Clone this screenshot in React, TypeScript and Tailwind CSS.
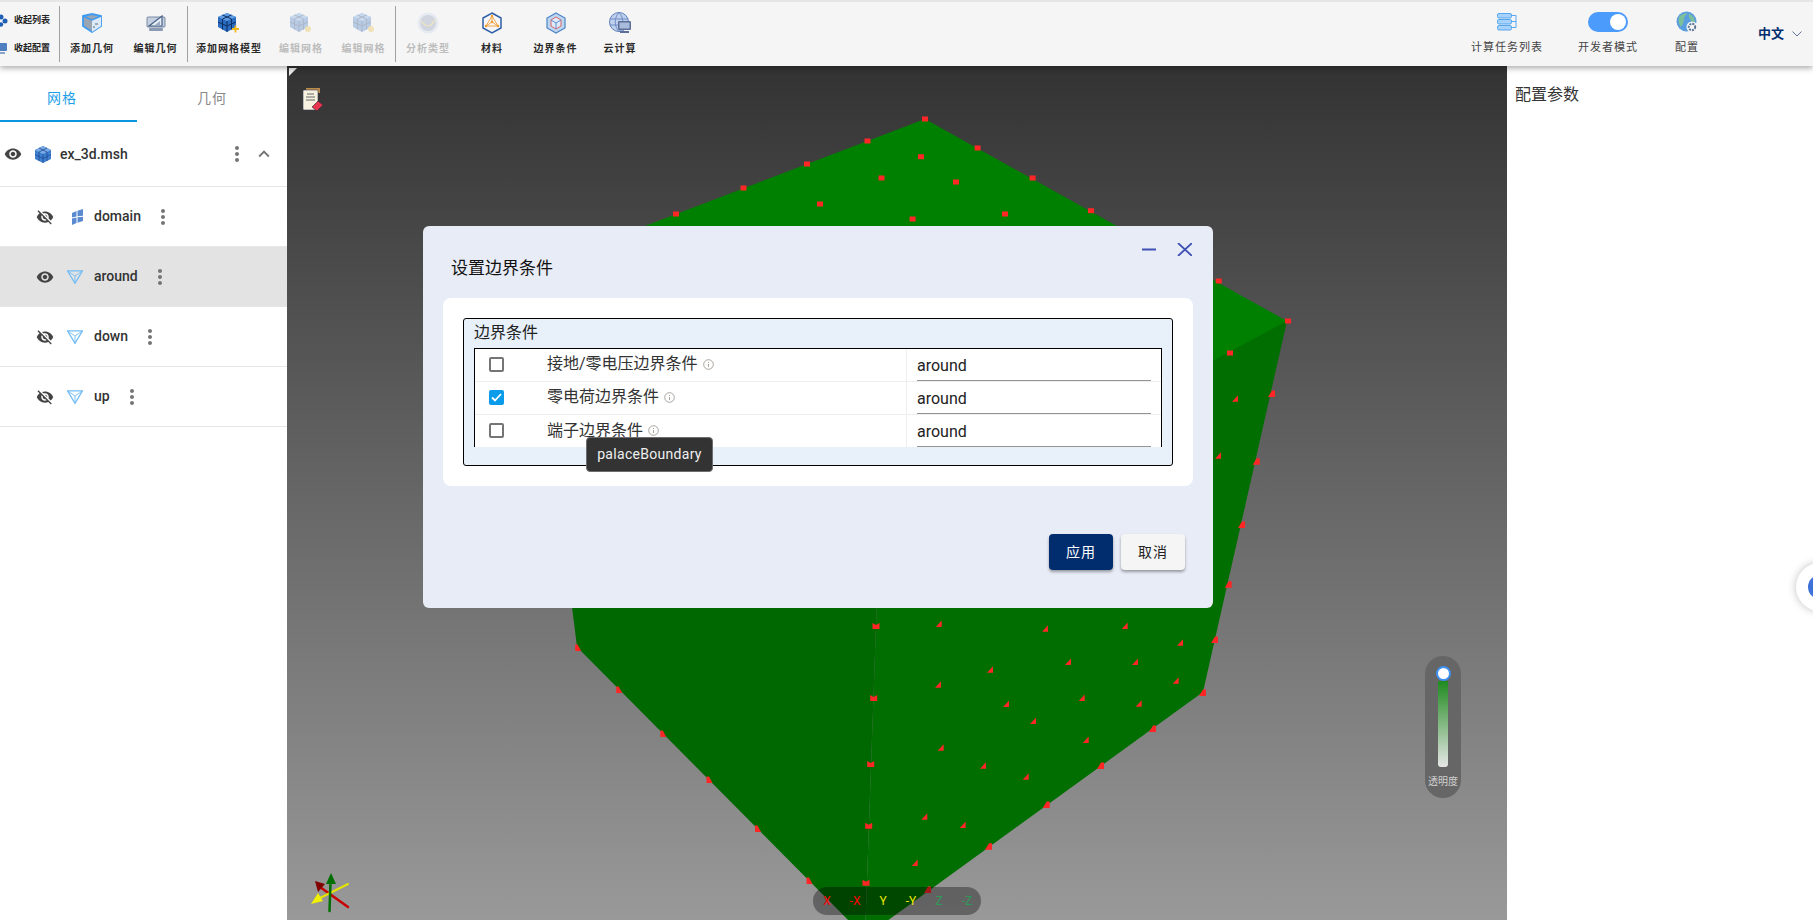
/**
 * Mesh / boundary condition editor page with the "设置边界条件" dialog open.
 */
import type { ReactNode } from 'react';
import { MdExpandLess, MdMoreVert, MdVisibility, MdVisibilityOff } from 'react-icons/md';

type Marker = [number, number];

const SQUARES: Marker[] = [
  [925, 119], [867.5, 141], [977.6, 148], [807, 164], [921, 156.7], [743.5, 188], [881.5, 178], [956, 182],
  [1032.6, 178], [676, 214], [820, 204], [1005, 214], [912.6, 219], [1091, 210.7], [1218.7, 281], [1288, 321],
  [1230, 353],
];
const TRIANGLES: Marker[] = [
  [938.7, 624], [1045, 628.7], [1124.7, 626], [1180, 642.7], [990, 669.7], [1068, 662], [1135, 662], [1175.7, 680.7],
  [938, 684.7], [1006, 704], [1081.7, 698], [1138.7, 703.7], [1033, 721], [1085.7, 740], [940.7, 747.7], [983, 765.7],
  [1025.7, 776.7], [924.3, 816.7], [962.7, 825], [914.7, 863], [1235, 398.7], [1218, 455.7],
];
const RIGHT_EDGE: Marker[] = [
  [1203, 693], [1153, 729], [1101, 766], [1046.7, 805], [989, 846.7], [928, 890], [1272, 394], [1256.7, 461.7],
  [1242, 525], [1228.7, 584.7], [1215, 640],
];
const NOTCHED: Marker[] = [[876, 626], [873.7, 698], [870.7, 764], [868.7, 825.7], [866, 882.7]];
const LEFT_EDGE: Marker[] = [[577.6, 648], [618.7, 690], [662.8, 734], [709, 780], [757.5, 829], [809, 881]];

function ModelView() {
  return (
    <svg className="absolute inset-0 h-full w-full" viewBox="287 66 1220 854">
      <polygon points="925,119 1287,321 1213,363 879,540 530,270" fill="#008000" />
      <polygon points="1287,321 1203,692 865,937 879,540" fill="#006e00" />
      <polygon points="530,270 879,540 865,937 577,647" fill="#006800" />
      {SQUARES.map(([x, y]) => (
        <rect key={`s${x}`} x={x - 3} y={y - 2.5} width="6" height="5" fill="#ff2626" />
      ))}
      {TRIANGLES.map(([x, y]) => (
        <polygon key={`t${x}`} points={`${x + 3},${y - 3.5} ${x + 3},${y + 3} ${x - 3},${y + 3}`} fill="#ff2626" />
      ))}
      {RIGHT_EDGE.map(([x, y]) => (
        <polygon
          key={`r${x}`}
          points={`${x},${y - 3.5} ${x + 3},${y - 3.5} ${x + 3},${y + 3} ${x - 4},${y + 3}`}
          fill="#ff2626"
        />
      ))}
      {NOTCHED.map(([x, y]) => (
        <polygon
          key={`n${x}`}
          points={`${x - 3.5},${y - 3} ${x},${y - 1} ${x + 3.5},${y - 3} ${x + 3.5},${y + 3} ${x - 3.5},${y + 3}`}
          fill="#ff2626"
        />
      ))}
      {LEFT_EDGE.map(([x, y]) => (
        <polygon
          key={`l${x}`}
          points={`${x - 2.5},${y - 3.5} ${x},${y - 3.5} ${x + 3.5},${y + 3} ${x - 2.5},${y + 3}`}
          fill="#ff2626"
        />
      ))}

      {/* corner marker */}
      <polygon points="289,68 297,68 289,76" fill="#eeeeee" />

      {/* notes icon */}
      <g transform="translate(303 88)">
        <rect x="3" y="0" width="14" height="5" fill="#b98a4a" />
        <rect x="0" y="2" width="15" height="20" rx="1" fill="#f7f1df" stroke="#3a3a55" strokeWidth="0.600" />
        <path d="M4 6h7M3 9h9M3 12h9" stroke="#666" strokeWidth="1" />
        <polygon points="9,19 15,13 20,17 14,23" fill="#e8344c" stroke="#2a2a3a" strokeWidth="0.600" />
      </g>

      {/* axis gizmo */}
      <g strokeLinecap="round">
        <line x1="348" y1="907" x2="320" y2="887" stroke="#c80000" strokeWidth="2.5" />
        <polygon points="315,881 325,884 318,892" fill="#800000" />
        <line x1="348" y1="884" x2="320" y2="898" stroke="#e4e400" strokeWidth="2" />
        <polygon points="311,904 318,893 323,901" fill="#f0f000" />
        <line x1="329.5" y1="911" x2="330.5" y2="882" stroke="#006e00" strokeWidth="2.5" />
        <polygon points="331,873 326,884 336,884" fill="#006e00" />
      </g>
    </svg>
  );
}

function MeshCube({ plus, dim }: { plus?: boolean; dim?: boolean }) {
  return (
    <svg width="22" height="21" viewBox="0 0 22 21" className={dim ? 'opacity-30' : ''}>
      <polygon points="9,0 18,4 18,14 9,19 0,14 0,4" fill="#2a6cc0" />
      <polygon points="9,0 18,4 9,8 0,4" fill="#5f9ce4" />
      <path d="M4.5 2 13.5 6M13.5 2 4.5 6M9 8v11M4.5 6v10.500M13.500 6v10.500M0 9l9 4 9-4" stroke="#0e2f63" strokeWidth="1" fill="none" />
      {plus ? (
        <path d="M14 16h7M17.500 12.500v7" stroke="#f2b91f" strokeWidth="1.800" />
      ) : (
        <circle cx="18" cy="16" r="3" fill="#e8b52a" />
      )}
    </svg>
  );
}

const TOOLBAR_ICONS: Record<string, ReactNode> = {
  addGeo: (
    <svg width="20" height="20" viewBox="0 0 20 20">
      <polygon points="1,3 10,1 19,3 19,13 10,19 1,13" fill="#9aa5b4" stroke="#3f9bf0" strokeWidth="1.800" />
      <polygon points="10,7 19,3 19,13 10,19" fill="#dce9f7" />
      <path d="M1 3 10 7 19 3" stroke="#3f9bf0" strokeWidth="1.500" fill="none" />
      <path d="M13 11h3M11 14h2" stroke="#5a6a80" strokeWidth="1" />
    </svg>
  ),
  editGeo: (
    <svg width="20" height="18" viewBox="0 0 20 18">
      <rect x="1" y="3" width="18" height="10" rx="1" fill="#c4cfdf" stroke="#7a8aa5" />
      <polygon points="3,12 16,2 16,12" fill="#e8eef6" stroke="#4a6288" strokeWidth="1.200" />
      <polygon points="9,11 14,7 14,11" fill="#9aaac2" />
      <rect x="3" y="14" width="14" height="3" rx="1" fill="#8b9bb5" />
    </svg>
  ),
  analysis: (
    <svg width="22" height="22" viewBox="0 0 22 22" className="opacity-30">
      <circle cx="11" cy="11" r="10.500" fill="#c5d4ea" />
      <circle cx="11" cy="11" r="8" fill="#7d8fae" />
      <path d="M3 9c3 0 3 5 8 5s5-6 8-6" stroke="#e8c04a" strokeWidth="1.200" fill="none" />
    </svg>
  ),
  material: (
    <svg width="20" height="22" viewBox="0 0 20 22">
      <polygon points="10,1 19,6 19,16 10,21 1,16 1,6" fill="none" stroke="#2e5fa8" strokeWidth="1.500" />
      <path d="M10 4 16 14H4Z M10 4V10M4 14l6-4 6 4" fill="none" stroke="#f0a040" strokeWidth="0.900" />
      <circle cx="10" cy="4" r="1.200" fill="#ef9a2e" />
      <circle cx="4" cy="14" r="1.200" fill="#ef9a2e" />
      <circle cx="16" cy="14" r="1.200" fill="#ef9a2e" />
      <circle cx="10" cy="10" r="1.200" fill="#ef9a2e" />
    </svg>
  ),
  boundary: (
    <svg width="20" height="22" viewBox="0 0 20 22">
      <polygon points="10,1 19,6 19,16 10,21 1,16 1,6" fill="#bcd6f2" stroke="#4f83c4" strokeWidth="1.200" />
      <polygon points="10,5 15,8 15,14 10,17 5,14 5,8" fill="#dfeaf8" stroke="#e05a5a" strokeWidth="0.900" />
      <path d="M5 8l5 3 5-3M10 11v6" stroke="#4f83c4" strokeWidth="0.900" fill="none" />
    </svg>
  ),
  cloud: (
    <svg width="22" height="22" viewBox="0 0 22 22">
      <circle cx="10" cy="10" r="9.500" fill="#bfd0ee" stroke="#5d7fb8" />
      <path d="M10 .500c-5 5-5 14 0 19M10 .500c5 5 5 14 0 19M1 7h18M1 13h18" stroke="#5d7fb8" fill="none" strokeWidth="0.800" />
      <rect x="9" y="9" width="13" height="9" rx="1" fill="#5d6f96" />
      <rect x="10.500" y="10.500" width="10" height="6" fill="#a9bbdc" />
      <rect x="11" y="19" width="9" height="2" fill="#5d6f96" />
    </svg>
  ),
  tasks: (
    <svg width="20" height="18" viewBox="0 0 20 18" fill="#a6d2fb" stroke="#4aa0ee" strokeWidth="0.900">
      <rect x="0.500" y="0.500" width="14" height="4.500" rx="1.500" />
      <rect x="0.500" y="6.500" width="14" height="4.500" rx="1.500" />
      <rect x="0.500" y="12.500" width="14" height="4.500" rx="1.500" />
      <path d="M14.500 2.500H19V14.500H14.500M14.500 8.500H19" fill="none" />
    </svg>
  ),
  config: (
    <svg width="22" height="22" viewBox="0 0 22 22">
      <circle cx="10.500" cy="10.500" r="10" fill="#5b9ee0" />
      <path d="M3 6c3-3 6-4 8-4-1 3-3 3-3 6s-2 6-3 8c-2-2-3-6-2-10ZM13 3c3 1 6 4 6 8-3 0-4-1-5-3s-2-3-1-5Z" fill="#7cc09a" />
      <circle cx="16" cy="16" r="5.500" fill="#f5f5f5" />
      <circle cx="16" cy="16" r="3.200" fill="none" stroke="#5c7596" strokeWidth="2" strokeDasharray="2 1" />
    </svg>
  ),
};

function ToolItem({ label, width, icon, disabled }: { label: string; width: string; icon: ReactNode; disabled?: boolean }) {
  return (
    <div className={`flex h-full shrink-0 flex-col items-center pt-[10px] ${width}`}>
      <div className="flex h-[22px] items-center justify-center">{icon}</div>
      <div className={`mt-[8px] text-[10px] leading-[14px] font-bold tracking-[1px] whitespace-nowrap ${disabled ? 'text-[#bdbdbd]' : 'text-[#2a2a2a]'}`}>
        {label}
      </div>
    </div>
  );
}

function RightTool({ label, width, icon }: { label: string; width: string; icon: ReactNode }) {
  return (
    <div className={`flex h-full shrink-0 flex-col items-center pt-[9px] ${width}`}>
      <div className="flex h-[22px] items-center justify-center">{icon}</div>
      <div className="mt-[8px] text-[11px] leading-[14px] tracking-[1px] text-[#444444] whitespace-nowrap">{label}</div>
    </div>
  );
}

function Divider() {
  return <div className="h-[56px] w-px shrink-0 bg-[#a0a0a0]" />;
}

function Toolbar() {
  return (
    <header className="relative z-10 flex h-[66px] shrink-0 items-center border-t-2 border-[#e6e6e6] bg-[#f5f5f5] shadow-[0_2px_6px_rgba(0,0,0,0.35)]">
      <div className="flex h-full w-[59px] shrink-0 flex-col gap-[13px] overflow-hidden pt-[11px] text-[9px] leading-[15px] font-bold text-[#222222]">
        <div className="flex items-center gap-[6px] pl-0">
          <svg width="8" height="13" viewBox="0 0 8 13" fill="#1f5fb4">
            <circle cx="1" cy="3" r="2.500" />
            <circle cx="5" cy="7" r="2.500" />
            <circle cx="1" cy="10.500" r="2.200" />
          </svg>
          <span>收起列表</span>
        </div>
        <div className="flex items-center gap-[6px]">
          <svg width="8" height="13" viewBox="0 0 8 13" fill="#4f7fc0">
            <rect x="-5" y="1" width="12" height="8" rx="1" />
            <rect x="-2" y="10" width="7" height="2" fill="#8aa4c8" />
          </svg>
          <span>收起配置</span>
        </div>
      </div>
      <Divider />
      <ToolItem label="添加几何" width="w-[64px]" icon={TOOLBAR_ICONS.addGeo} />
      <ToolItem label="编辑几何" width="w-[63px]" icon={TOOLBAR_ICONS.editGeo} />
      <Divider />
      <ToolItem label="添加网格模型" width="w-[82px]" icon={<MeshCube plus />} />
      <ToolItem label="编辑网格" width="w-[62px]" icon={<MeshCube dim />} disabled />
      <ToolItem label="编辑网格" width="w-[63px]" icon={<MeshCube dim />} disabled />
      <Divider />
      <ToolItem label="分析类型" width="w-[64px]" icon={TOOLBAR_ICONS.analysis} disabled />
      <ToolItem label="材料" width="w-[64px]" icon={TOOLBAR_ICONS.material} />
      <ToolItem label="边界条件" width="w-[63px]" icon={TOOLBAR_ICONS.boundary} />
      <ToolItem label="云计算" width="w-[66px]" icon={TOOLBAR_ICONS.cloud} />

      <div className="ml-auto flex h-full items-start">
        <RightTool label="计算任务列表" width="w-[88px]" icon={TOOLBAR_ICONS.tasks} />
        <RightTool
          label="开发者模式"
          width="w-[72px] ml-[21px]"
          icon={
            <div className="flex h-[20px] w-[40px] items-center justify-end rounded-full bg-[#4a9bfb] pr-[2px]">
              <div className="size-[16px] rounded-full bg-white" />
            </div>
          }
        />
        <RightTool label="配置" width="w-[40px] ml-[23px]" icon={TOOLBAR_ICONS.config} />
        <div className="ml-[51px] flex items-center pt-[24px] pr-[11px]">
          <span className="text-[13px] leading-[16px] font-bold text-[#012d6f]">中文</span>
          <svg className="ml-[8px]" width="10" height="6" viewBox="0 0 10 6" fill="none" stroke="#5d7596">
            <path d="M.5.5 5 5 9.500.5" />
          </svg>
        </div>
      </div>
    </header>
  );
}

function Triangle() {
  return (
    <svg width="16" height="14" viewBox="0 0 16 14" fill="none" stroke="#74bdf5" strokeWidth="1">
      <polygon points="0.500,0.800 15.500,0.800 8,13.300" strokeWidth="1.300" />
      <path d="M.5.800 8 6l7.500-5.200M8 6v7.300" strokeWidth="0.900" />
    </svg>
  );
}

function MeshRow({ name, visible, active, icon }: { name: string; visible?: boolean; active?: boolean; icon: ReactNode }) {
  const Eye = visible ? MdVisibility : MdVisibilityOff;
  return (
    <div className={`flex h-[60px] items-center border-b border-[#e6e6e6] pl-[36px] ${active ? 'bg-[#e3e3e3]' : ''}`}>
      <Eye size={18} className="text-[#444444]" />
      <div className="ml-[13px] flex w-[16px] justify-center">{icon}</div>
      <span className="mb-[1px] ml-[11px] text-[14px] leading-[20px] font-medium text-[#333333]">{name}</span>
      <MdMoreVert size={24} className="ml-[10px] text-[#757575]" />
    </div>
  );
}

function Sidebar() {
  return (
    <aside className="w-[287px] shrink-0 bg-white">
      <div className="flex h-[56px] text-[14px] tracking-[1px]">
        <div className="flex w-[137px] items-center justify-center border-b-2 border-[#0a96e0] pt-[11px] pr-[13px] text-[#1ea0e8]">网格</div>
        <div className="flex flex-1 items-center justify-center pt-[9px] text-[#888888]">几何</div>
      </div>
      <div className="flex h-[65px] items-center border-b border-[#e6e6e6] pl-[4px]">
        <MdVisibility size={18} className="text-[#444444]" />
        <svg className="ml-[13px]" width="16" height="17" viewBox="0 0 16 17">
          <polygon points="8,0 16,4 16,13 8,17 0,13 0,4" fill="#3f7fd0" />
          <polygon points="8,0 16,4 8,8 0,4" fill="#7aaae6" />
          <path d="M4 2l8 4M12 2 4 6M8 8v9M4 6v9M12 6v9M0 8.500l8 4 8-4" stroke="#1e4d94" strokeWidth="0.800" fill="none" />
        </svg>
        <span className="ml-[9px] text-[14px] leading-[20px] font-medium text-[#333333]">ex_3d.msh</span>
        <MdMoreVert size={24} className="ml-[97px] text-[#757575]" />
        <MdExpandLess size={22} className="ml-[4px] text-[#757575]" />
      </div>
      <MeshRow
        name="domain"
        icon={
          <svg className="ml-[4px] shrink-0" width="12" height="16" viewBox="0 0 12 16" fill="#5b8ad0">
            <polygon points="1,4 5.500,2 5.500,7.500 1,8.500" />
            <polygon points="6.500,1.800 12,0 12,6.800 6.500,7.300" />
            <polygon points="1,9.500 5.500,8.500 5.500,14 1,16" />
            <polygon points="6.500,8.300 12,7.800 12,12 6.500,13.800" />
          </svg>
        }
      />
      <MeshRow name="around" visible active icon={<Triangle />} />
      <MeshRow name="down" icon={<Triangle />} />
      <MeshRow name="up" icon={<Triangle />} />
    </aside>
  );
}

function InfoDot() {
  return (
    <svg width="11" height="11" viewBox="0 0 11 11" fill="none" stroke="#a09a94" strokeWidth="0.900" className="ml-[5px]">
      <circle cx="5.500" cy="5.500" r="4.800" />
      <path d="M5.500 5v3M5.500 3v1" />
    </svg>
  );
}

function ConditionRow({ label, checked, last }: { label: string; checked?: boolean; last?: boolean }) {
  return (
    <div className={`grid h-[33px] shrink-0 grid-cols-[432px_1fr] ${last ? '' : 'border-b border-[#eeeeee]'}`}>
      <div className="flex items-center border-r border-[#eeeeee] pb-[2px] pl-[14px]">
        {checked ? (
          <div className="flex size-[15px] items-center justify-center rounded-[2px] bg-[#0a9bea]">
            <svg width="11" height="9" viewBox="0 0 11 9" fill="none" stroke="white" strokeWidth="1.800">
              <path d="M1 4.500 4 7.500 10 1" />
            </svg>
          </div>
        ) : (
          <div className="size-[15px] rounded-[2px] border-2 border-[#757575] bg-white" />
        )}
        <span className="ml-[43px] text-[16px] leading-[20px] text-[#333333]">{label}</span>
        <InfoDot />
      </div>
      <div className="pr-[10px] pl-[10px]">
        <div className="flex h-[32px] items-center border-b border-[#949494] pt-[2px] text-[16px] text-[#222222]">around</div>
      </div>
    </div>
  );
}

function BoundaryDialog() {
  return (
    <div className="absolute top-[160px] left-[136px] z-20 flex h-[382px] w-[790px] flex-col rounded-[6px] bg-[#e8ecf6]">
      <div className="relative h-[72px] shrink-0 pt-[30px] pl-[28px] text-[17px] leading-[24px] text-[#111111]">
        设置边界条件
        <svg className="absolute top-[17px] right-[21px]" width="50" height="13" viewBox="0 0 50 13" fill="none" stroke="#3f51b5" strokeWidth="1.800">
          <path d="M0 6.500h14M36 0l14 13M50 0 36 13" />
        </svg>
      </div>
      <div className="mx-[20px] h-[188px] shrink-0 rounded-[8px] bg-white p-[20px]">
        <div className="h-[148px] rounded-[3px] border border-black bg-[#e8f1fa] px-[10px]">
          <div className="h-[29px] pt-[1px] text-[16px] leading-[26px] text-[#222222]">边界条件</div>
          <div className="flex h-[99px] flex-col overflow-hidden border-x border-t border-black bg-white">
            <ConditionRow label="接地/零电压边界条件" />
            <ConditionRow label="零电荷边界条件" checked />
            <ConditionRow label="端子边界条件" last />
          </div>
        </div>
      </div>
      <div className="mt-[48px] flex justify-end gap-[8px] pr-[28px] text-[14px]">
        <button className="h-[36px] w-[64px] rounded-[4px] bg-[#012d6f] tracking-[1px] text-white shadow-[0_2px_3px_rgba(0,0,0,0.35)]">应用</button>
        <button className="h-[36px] w-[64px] rounded-[4px] bg-[#f5f5f5] tracking-[1px] text-[#222222] shadow-[0_2px_3px_rgba(0,0,0,0.35)]">取消</button>
      </div>
      <div className="absolute top-[211px] left-[163px] flex h-[35px] w-[127px] items-center justify-center rounded-[4px] border border-[#6e6e6e] bg-[#333333] text-[14px] tracking-[0.3px] text-[#f0f0f0]">
        palaceBoundary
      </div>
    </div>
  );
}

function OpacitySlider() {
  return (
    <div className="absolute top-[590px] left-[1138px] flex h-[142px] w-[36px] flex-col items-center rounded-full bg-[#666666] pt-[10px]">
      <div className="z-10 h-[15px] w-[15px] rounded-full border-2 border-[#3d8ff0] bg-white" />
      <div className="h-[86px] w-[10px] rounded-b-[3px] bg-linear-to-b/srgb from-[#1f8a1f] to-[#e6e6e6]" />
      <div className="mt-[8px] text-[10px] leading-[14px] text-[#d0d0d0]">透明度</div>
    </div>
  );
}

const AXES: [string, string][] = [
  ['X', 'text-[#ff0000]'],
  ['-X', 'text-[#ff0000]'],
  ['Y', 'text-[#e8e800]'],
  ['-Y', 'text-[#e8e800]'],
  ['Z', 'text-[#2e9a5a]'],
  ['-Z', 'text-[#2e9a5a]'],
];

function AxisBar() {
  return (
    <div className="absolute top-[821px] left-[526px] flex h-[28px] w-[168px] items-center justify-between rounded-full bg-black/35 px-[6px] text-[12px]">
      {AXES.map(([label, color]) => (
        <span key={label} className={`w-[16px] text-center ${color}`}>
          {label}
        </span>
      ))}
    </div>
  );
}

export default function App() {
  return (
    <div className="flex h-screen w-screen flex-col overflow-hidden bg-white font-['Roboto','Noto_Sans_CJK_SC',sans-serif]">
      <Toolbar />
      <div className="flex min-h-0 flex-1">
        <Sidebar />
        <main className="relative w-[1220px] shrink-0 bg-linear-to-b/srgb from-[#333333] to-[#999999]">
          <ModelView />
          <OpacitySlider />
          <AxisBar />
          <BoundaryDialog />
        </main>
        <section className="relative flex-1 bg-white pt-[19px] pl-[8px] text-[16px] leading-[20px] text-[#333333]">
          配置参数
          <div className="absolute top-[497px] left-[289px] size-[48px] rounded-full bg-white shadow-[0_0_8px_rgba(0,0,0,0.25)]">
            <div className="mt-[12px] ml-[12px] size-[24px] rounded-full bg-[#3f72d8]" />
          </div>
        </section>
      </div>
    </div>
  );
}
